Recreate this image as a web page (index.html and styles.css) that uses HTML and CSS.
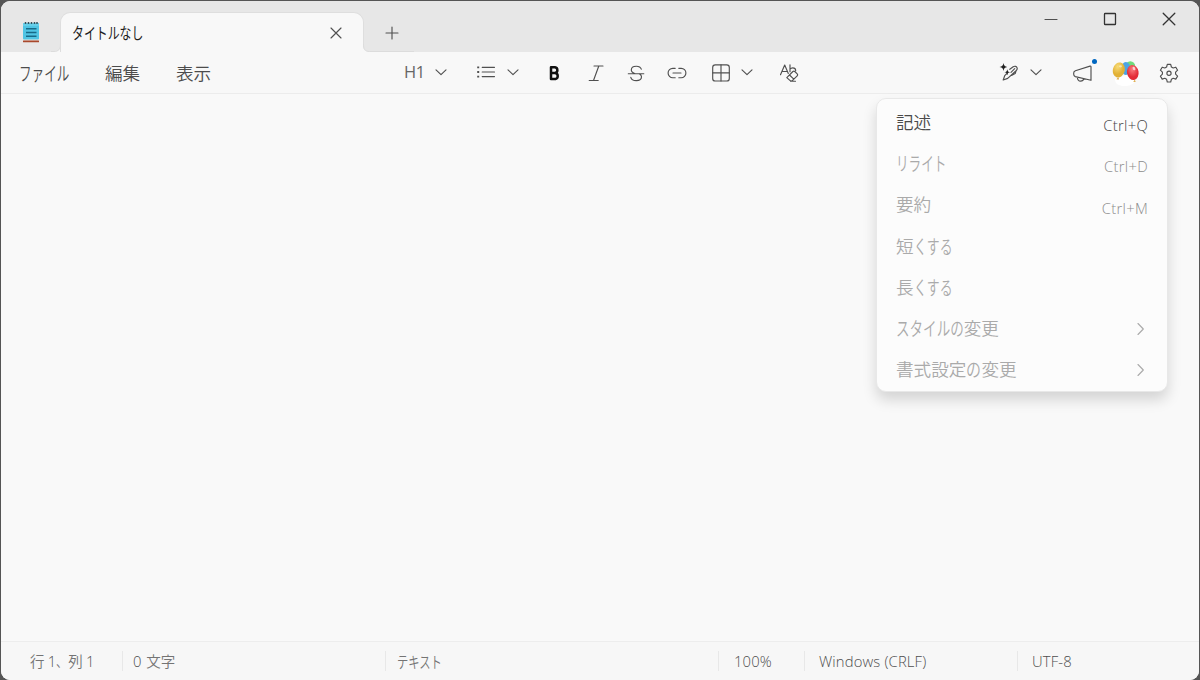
FILE: index.html
```html
<!DOCTYPE html>
<html lang="ja">
<head>
<meta charset="utf-8">
<title>タイトルなし</title>
<link rel="stylesheet" href="styles.css">
</head>
<body>
<svg class="defs" width="0" height="0">
  <symbol id="chev" viewBox="0 0 22 24"><path d="M6 9.800l5 4.800 5-4.800"/></symbol>
  <symbol id="chevr" viewBox="0 0 12 16"><path d="M3 2.500l5.300 5.500L3 13.500"/></symbol>
</svg>
<div class="window">
  <header class="titlebar">
    <svg class="app" viewBox="0 0 20 24" width="20" height="24">
      <rect x="2" y="20" width="16" height="2.300" rx=".6" fill="#a9482c"/>
      <rect x="2" y="19" width="16" height="1.500" fill="#e8e2dd"/>
      <rect x="2" y="3" width="16" height="16.500" rx="1" fill="#50c5e4"/>
      <path d="M2 3h16v3H2z" fill="#66cfe9"/>
      <path d="M4.500 2v2M7.500 2v2M10.500 2v2M13.500 2v2M16 2v2" stroke="#35505c" stroke-width="1.500"/>
      <path d="M5 8.800h10.500M5 12.500h10.500M5 16.200h10.500" stroke="#176a88" stroke-width="1.500"/>
    </svg>
    <svg class="flare" viewBox="0 0 10 8" width="10" height="8"><path class="base" d="M10 0v8H0C7 8 10 6 10 0z"/><path class="edge" d="M0 7.500h3C7.500 7.500 9.500 5 9.500 0"/></svg>
    <div class="tab">
      <span class="tab-name"><span class="kana n6">タイトルなし</span></span>
      <svg class="line" viewBox="0 0 12 12" width="12" height="12"><path d="M1 1l10 10M11 1L1 11"/></svg>
    </div>
    <svg class="flare right" viewBox="0 0 51 8" width="51" height="8"><path class="base" d="M0 0v8h8C2 8 0 6 0 0z"/><path class="edge" d="M.5 0c0 5 1.500 7.500 6 7.500H51"/></svg>
    <svg class="line plus" viewBox="0 0 14 14" width="14" height="14"><path d="M7 1v12M1 7h12"/></svg>
    <div class="controls">
      <svg class="line" viewBox="0 0 14 14" width="14" height="14"><path d="M1 7.500h12"/></svg>
      <svg class="line strong" viewBox="0 0 14 14" width="14" height="14"><rect x="1.500" y="1.500" width="11" height="11" rx=".6"/></svg>
      <svg class="line strong" viewBox="0 0 14 14" width="14" height="14"><path d="M1.200 1.200l11.600 11.600M12.800 1.200L1.200 12.800"/></svg>
    </div>
  </header>
  <nav class="toolbar">
    <span class="m-file"><span class="kana n4">ファイル</span></span>
    <span class="m-edit">編集</span>
    <span class="m-view">表示</span>
    <span class="h1">H1</span>
    <svg class="line chev"><use href="#chev"/></svg>
    <svg class="line list" viewBox="0 0 24 24"><path d="M8.200 7.300h12.300M8.200 12h12.300M8.200 16.600h12.300"/><path class="dots" d="M3.200 7.300h2M3.200 12h2M3.200 16.600h2"/></svg>
    <svg class="line chev c2"><use href="#chev"/></svg>
    <svg class="line bold" viewBox="0 0 24 24"><path d="M9 6.300v11.800h4.500a3.200 3.200 0 0 0 0-6.100H9h4a2.900 2.900 0 0 0 0-5.700z"/></svg>
    <svg class="line italic" viewBox="0 0 24 24"><path d="M10 5h9M5.200 19.500h9M14.800 5L9.500 19.500"/></svg>
    <svg class="line strike" viewBox="0 0 24 24"><path d="M4.300 12.700h15.500M17.300 8.200c-.6-2-2.500-3-5-3-2.900 0-5 1.500-5 3.800 0 1.900 1.400 2.900 4 3.700M15.300 12.700c1.500.8 2.200 1.700 2.200 3 0 2.400-2.200 3.900-5.200 3.900-2.900 0-4.900-1.100-5.500-3.300"/></svg>
    <svg class="line link" viewBox="0 0 24 24"><path d="M10.200 7.300H7.800a4.700 4.700 0 0 0 0 9.400h2.400M13.800 7.300h2.400a4.700 4.700 0 0 1 0 9.400h-2.400M8 12h8"/></svg>
    <svg class="line table" viewBox="0 0 24 24"><rect x="3.700" y="3.800" width="16.600" height="16.200" rx="2.600"/><path d="M12 3.800v16.200M3.700 11.900h16.600"/></svg>
    <svg class="line chev c3"><use href="#chev"/></svg>
    <svg class="line clear" viewBox="0 0 24 24"><path d="M3.500 13.700L7.700 4l3.600 8.400M5 10.500h5.500M13 3.700v7M13 8.200c.8-1 1.600-1.400 2.700-1.400 2 0 3 1.300 3 2.900"/><path d="M9.800 16.600l6.100-6.100c.6-.6 1.300-.6 1.900 0l2.400 2.400c.6.6.6 1.300 0 1.900l-4.400 4.400c-1 1-2.200 1-3.200 0l-2.800-2.600zM12.500 14l4.300 4.100M13.500 20.200h5"/></svg>
    <svg class="line pen" viewBox="0 0 24 24"><path class="fill" d="M6.500 2c.7 2.900 1 3.200 4 3.900-3 .7-3.300 1-4 4-.7-3-1-3.300-4-4 3-.7 3.300-1 4-3.900zM10.300 8.200c.5 2.200.8 2.500 3 3-2.200.5-2.500.8-3 3-.5-2.200-.8-2.500-3-3 2.200-.5 2.500-.8 3-3z"/><path d="M12.800 8.300l3.400-2.500c1.500-1.100 3.600-.5 4 1.300.2 1-.2 1.700-.9 2.400l-8.600 7.900-4.500 1.600 1.500-4.300 2.200-2.200M14 11.300l3.700-3.600M14.500 14.500l3.700-1.900.8-2.500"/></svg>
    <svg class="line chev c4"><use href="#chev"/></svg>
    <span class="mega"><svg class="line" viewBox="0 0 24 24" width="24" height="24"><path d="M20 5.800v13.500L4.300 15.600A2.400 2.400 0 0 1 2.700 13.300v-1.200c0-1.200.6-2 1.700-2.400L19 5.100c.6-.2 1 .1 1 .7zM6.300 16.200c.2 2.400 1.500 3.900 3.300 3.900 1.700 0 2.900-1 3.200-2.400"/></svg><i class="dot"></i></span>
    <svg class="balloons" viewBox="0 0 28 28">
      <defs>
        <radialGradient id="by" cx=".35" cy=".3"><stop offset="0" stop-color="#f8dc78"/><stop offset="1" stop-color="#e2b135"/></radialGradient>
        <radialGradient id="br" cx=".5" cy=".3"><stop offset="0" stop-color="#fa7b7e"/><stop offset="1" stop-color="#e32c37"/></radialGradient>
      </defs>
      <path d="M3 20c0 5 4 7 9 7s9-1 11-5l-6-7z" fill="#fff"/>
      <ellipse cx="18.300" cy="7.500" rx="5" ry="5.200" fill="#6fdb7c"/>
      <ellipse cx="13.800" cy="9.500" rx="4.600" ry="6.500" fill="#4da3e4"/>
      <ellipse cx="6.800" cy="11" rx="5.900" ry="7.700" transform="rotate(14 6.800 11)" fill="url(#by)"/>
      <ellipse cx="20.800" cy="13.500" rx="5.800" ry="7.600" transform="rotate(-10 20.800 13.500)" fill="url(#br)"/>
      <path d="M4.300 20.200l2.200-1.700.4 2zM21.300 23l1.300-2 1.300 1.500z" fill="#d99a22"/>
      <ellipse cx="22" cy="9.500" rx="1.300" ry="1.900" transform="rotate(-25 22 9.500)" fill="#fff" opacity=".7"/>
      <ellipse cx="8.500" cy="7.300" rx="1.500" ry="1.100" fill="#fff" opacity=".5"/>
    </svg>
    <svg class="line gear" viewBox="0 0 24 24"><path d="M10.300 3.300h3.400l.7 2.700 1.800 1 2.600-.8 1.800 3-2 1.900v2.100l2 1.900-1.800 3-2.600-.8-1.800 1-.7 2.700h-3.400l-.7-2.700-1.800-1-2.600.8-1.800-3 2-1.900v-2.100l-2-1.900 1.800-3 2.600.8 1.800-1z"/><circle cx="12" cy="12.200" r="2.100"/></svg>
  </nav>
  <main class="editor"></main>
  <footer class="status">
    <span class="s-pos">行 <span class="seg">1</span><span class="comma">、</span>列 <span class="seg">1</span></span>
    <span class="s-count"><span class="seg">0</span> 文字</span>
    <span class="s-type"><span class="kana n4">テキスト</span></span>
    <span class="s-zoom"><span class="seg">100%</span></span>
    <span class="s-eol"><span class="seg">Windows (CRLF)</span></span>
    <span class="s-enc"><span class="seg">UTF-8</span></span>
  </footer>
  <div class="menu">
    <div class="row on"><span class="label">記述</span><span class="key">Ctrl+Q</span></div>
    <div class="row"><span class="label"><span class="kana n4">リライト</span></span><span class="key">Ctrl+D</span></div>
    <div class="row"><span class="label">要約</span><span class="key">Ctrl+M</span></div>
    <div class="row"><span class="label">短<span class="kana n3">くする</span></span></div>
    <div class="row"><span class="label">長<span class="kana n3">くする</span></span></div>
    <div class="row"><span class="label"><span class="kana n5">スタイルの</span>変更</span><svg class="line" width="12" height="16"><use href="#chevr"/></svg></div>
    <div class="row"><span class="label">書式設定<span class="kana n1">の</span>変更</span><svg class="line" width="12" height="16"><use href="#chevr"/></svg></div>
  </div>
</div>
</body>
</html>
```
FILE: styles.css
```css
* { box-sizing: border-box; }
body {
  margin: 0;
  width: 1200px;
  height: 680px;
  padding: 1px 1px 0;
  overflow: hidden;
  background: #555;
  color: #4c4c4c;
  font: 350 17.6px/24px "Noto Sans CJK JP", sans-serif;
}
span { white-space: nowrap; }
svg { flex: none; display: block; }
.defs { position: absolute; }
.window {
  position: relative;
  display: flex;
  flex-direction: column;
  height: 679px;
  border-radius: 9px;
  overflow: hidden;
  background: #f9f9f9;
}
.line {
  fill: none;
  stroke: #505050;
  stroke-width: 1.15;
  stroke-linecap: round;
  stroke-linejoin: round;
}
.strong { stroke: #333; stroke-width: 1.3; }
.kana {
  --sx: .715;
  display: inline-block;
  transform: scale(var(--sx), 1.1);
  transform-origin: 0 50%;
  margin-right: calc(var(--n) * -1em * (1 - var(--sx)));
}
.n1 { --n: 1; --sx: .85; }
.n3 { --n: 3; --sx: .73; }
.n4 { --n: 4; }
.n5 { --n: 5; --sx: .77; }
.n6 { --n: 6; --sx: .82; }

.titlebar {
  display: flex;
  height: 51px;
  background: #e7e7e7;
}
.app { margin: 19px 0 0 20px; }
.flare { align-self: flex-end; margin: 0 -1px 0 10px; }
.flare.right { margin: 0 -51px 0 -1px; }
.base { fill: #f8f8f8; }
.edge { fill: none; stroke: #dcdcdc; }
.tab {
  display: flex;
  align-items: center;
  justify-content: space-between;
  width: 304px;
  height: 40px;
  margin: 11px 0 0;
  padding: 0 21px 0 11px;
  border: 1px solid #dedede;
  border-bottom: 0;
  border-radius: 10px 10px 0 0;
  background: #f8f8f8;
  color: #1d1d1d;
}
.tab-name { margin-top: -2px; font-size: 14.5px; font-weight: 400; }
.plus { margin: 25px 0 0 22px; }
.controls { display: flex; gap: 45px; margin: 11px 23.5px 0 auto; }

.toolbar {
  display: flex;
  align-items: center;
  height: 42px;
  padding-left: 18px;
  border-bottom: 1px solid #ececec;
  background: #f8f8f8;
}
.toolbar > svg { width: 24px; height: 24px; }
.m-file { width: 86px; }
.m-edit { width: 71px; }
.m-view { width: 228px; }
.h1 { width: 26px; margin-top: -1px; font: 400 16.5px/24px "Open Sans", sans-serif; letter-spacing: -.3px; color: #666; }
.toolbar > .chev { width: 22px; margin-top: -2px; }
.list { margin: -2px 0 0 22px; }
.dots { stroke-width: 1.8; stroke-linecap: butt; }
.c2 { margin-left: 4px; }
.bold { margin-left: 18px; stroke: #111; stroke-width: 2.5; }
.italic { margin-left: 18px; }
.strike { margin-left: 16px; }
.link { margin-left: 17px; }
.table { margin-left: 20px; }
.c3 { margin-left: 3px; }
.clear { margin-left: 19px; }
.pen { margin-left: 196px; }
.fill { fill: #222; stroke: none; }
.c4 { margin-left: 4px; }
.mega { position: relative; margin-left: 24px; }
.dot {
  position: absolute;
  top: -2px;
  right: -2px;
  width: 5px;
  height: 5px;
  border-radius: 50%;
  background: #0067c0;
}
.toolbar > .balloons { width: 28px; height: 28px; margin-left: 17px; }
.toolbar > .gear { margin-left: 17px; }

.editor { flex: 1; }
.status {
  display: flex;
  align-items: center;
  height: 39px;
  border-top: 1px solid #ededed;
  background: #f7f7f7;
  color: #747474;
  font-size: 14.5px;
}
.status > span { height: 20px; line-height: 20px; border-left: 1px solid #e8e8e8; padding-left: 10px; }
.status > .s-pos { width: 121px; padding-left: 29px; border: 0; }
.comma { display: inline-block; transform: scaleX(.8); transform-origin: 0 50%; margin-right: -2.5px; }
.status > .s-count { width: 263px; word-spacing: 1.5px; }
.status > .s-type { width: 333px; padding-left: 11px; }
.s-type .kana { --sx: .78; }
.status > .s-zoom { width: 86px; padding-left: 15px; }
.status > .s-eol { width: 213px; padding-left: 14px; }
.status > .s-enc { padding-left: 14px; }
.seg { font-family: "Open Sans", sans-serif; font-weight: 350; font-size: 14.8px; letter-spacing: .15px; color: #4e4e4e; }

.menu {
  position: absolute;
  top: 97px;
  left: 875px;
  width: 292px;
  height: 294px;
  padding: 3px 19px 0 19px;
  border: 1px solid #e8e8e8;
  border-radius: 10px;
  background: #fcfcfc;
  box-shadow: 0 8px 14px rgba(0, 0, 0, .15);
}
.row {
  display: flex;
  align-items: center;
  justify-content: space-between;
  height: 41.3px;
  color: #aaa;
}
.label { padding-bottom: 2px; }
.row > .line { margin-right: 1px; stroke: #aaa; }
.key { font: 350 14.8px/20px "Open Sans", sans-serif; letter-spacing: .3px; padding-top: 5px; color: #8c8c8c; }
.on { color: #4a4a4a; }
.on .key { color: #444; }
```
